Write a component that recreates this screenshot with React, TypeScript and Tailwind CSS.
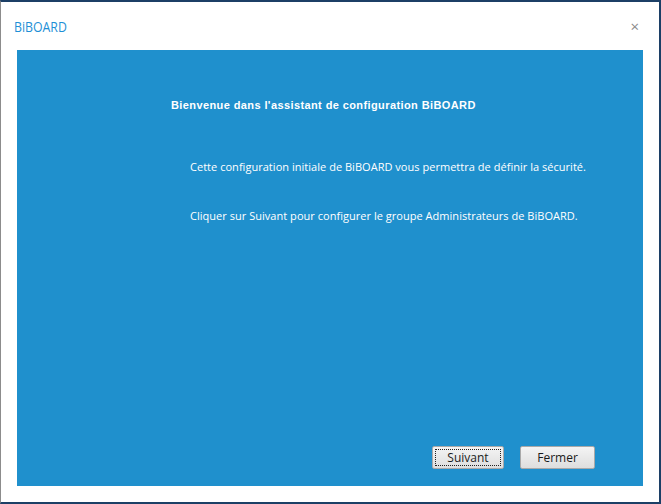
export default function App() {
  return (
    <div
      className="w-[661px] h-[504px] bg-white flex flex-col border-t-2 border-l border-r-2 border-b-2 border-t-[#1c3f66] border-l-[#8c8c8c] border-r-[#1c3f66] border-b-[#1c3f66]"
      style={{ fontFamily: '"Open Sans", "Liberation Sans", sans-serif' }}
    >
      <div className="h-[48px] flex items-center justify-between pl-[13px] pr-[20px] shrink-0">
        <span className="inline-block text-[15px] text-[#1e8fd6] mt-[1px] origin-left scale-x-[0.82]">BiBOARD</span>
        <span className="text-[#8a8a8a] text-[15px] leading-none">×</span>
      </div>

      <div className="mx-[16px] mb-[16px] flex-1 bg-[#1f90cd] flex flex-col text-white">
        <h1
          className="mt-[49px] ml-[154px] text-[11px] leading-[13px] font-bold tracking-[0.4px]"
          style={{ fontFamily: '"Liberation Sans", Arial, sans-serif' }}
        >
          Bienvenue dans l'assistant de configuration BiBOARD
        </h1>
        <p className="mt-[47px] ml-[173px] text-[11px] leading-[16px] tracking-[0.03px]">
          Cette configuration initiale de BiBOARD vous permettra de définir la sécurité.
        </p>
        <p className="mt-[33px] ml-[173px] text-[11px] leading-[16px] tracking-[0.03px]">
          Cliquer sur Suivant pour configurer le groupe Administrateurs de BiBOARD.
        </p>
        <div className="flex-1" />
        <div className="flex justify-end gap-[16px] pr-[48px] pb-[17px]">
          <button className="w-[72px] h-[23px] rounded-[2px] border border-[#a9a9a9] bg-gradient-to-b from-[#f4f4f4] to-[#dedede] text-[12px] text-[#1a1a1a] p-[2px]">
            <span className="flex h-full w-full items-center justify-center border border-dotted border-[#222]">Suivant</span>
          </button>
          <button className="w-[75px] h-[23px] rounded-[2px] border border-[#a9a9a9] bg-gradient-to-b from-[#f4f4f4] to-[#dedede] text-[12px] text-[#1a1a1a]">
            Fermer
          </button>
        </div>
      </div>
    </div>
  );
}
